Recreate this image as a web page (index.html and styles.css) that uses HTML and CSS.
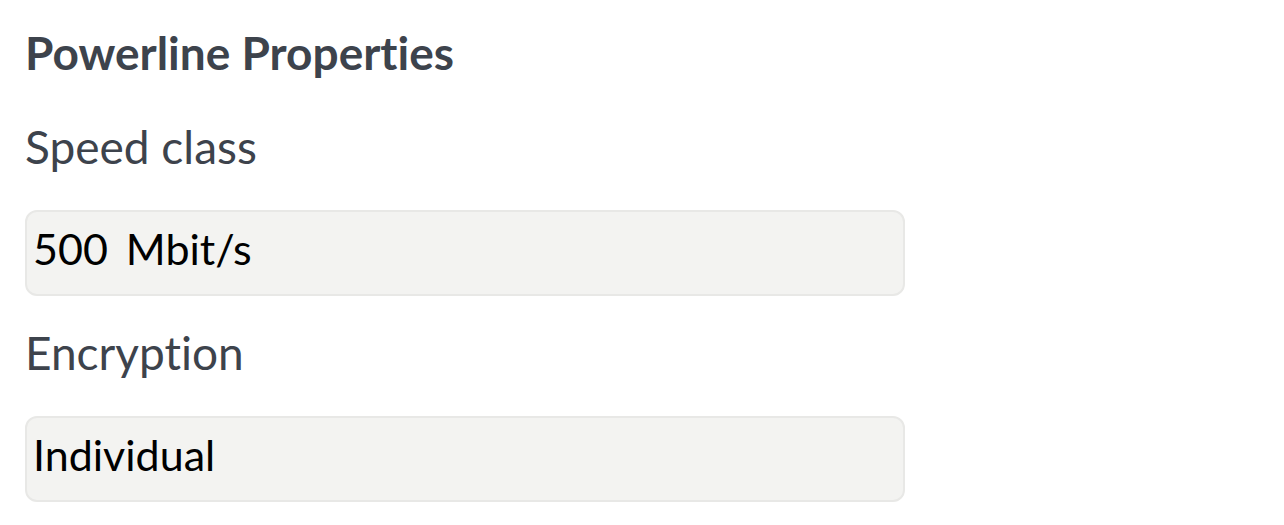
FILE: index.html
```html
<!DOCTYPE html>
<html lang="en">
<head>
    <meta charset="UTF-8">
    <meta name="viewport" content="width=device-width, initial-scale=1.0">
    <title>Powerline Properties</title>
    <link rel="stylesheet" href="styles.css">
</head>
<body>
    <div class="panel">
        <h2 class="title">Powerline Properties</h2>

        <div class="field">
            <label class="label">Speed class</label>
            <div class="value"><span>500</span><span class="unit">Mbit/s</span></div>
        </div>

        <div class="field">
            <label class="label">Encryption</label>
            <div class="value">Individual</div>
        </div>
    </div>
</body>
</html>
```

FILE: styles.css
```css
body {
    margin: 0;
    padding: 0;
    background-color: #fff;
    font-family: Lato, "Open Sans", sans-serif;
    font-variant-ligatures: none;
}

.panel {
    width: 880px;
    padding: 25px 0 0 25px;
}

.title {
    margin: 0 0 36px 0;
    font-size: 46px;
    font-weight: 700;
    color: #3d434c;
    line-height: 56px;
}

.field {
    display: flex;
    flex-direction: column;
    margin-bottom: 27px;
}

.label {
    font-size: 46px;
    color: #3d434c;
    line-height: 60px;
    margin-bottom: 33px;
}

.value {
    box-sizing: border-box;
    height: 86px;
    padding: 0 6px 10px 6px;
    display: flex;
    align-items: center;
    background-color: #f3f3f1;
    border: 2px solid #e8e8e6;
    border-radius: 12px;
    font-size: 43px;
    color: #000;
}

.unit {
    margin-left: 18px;
}
```
